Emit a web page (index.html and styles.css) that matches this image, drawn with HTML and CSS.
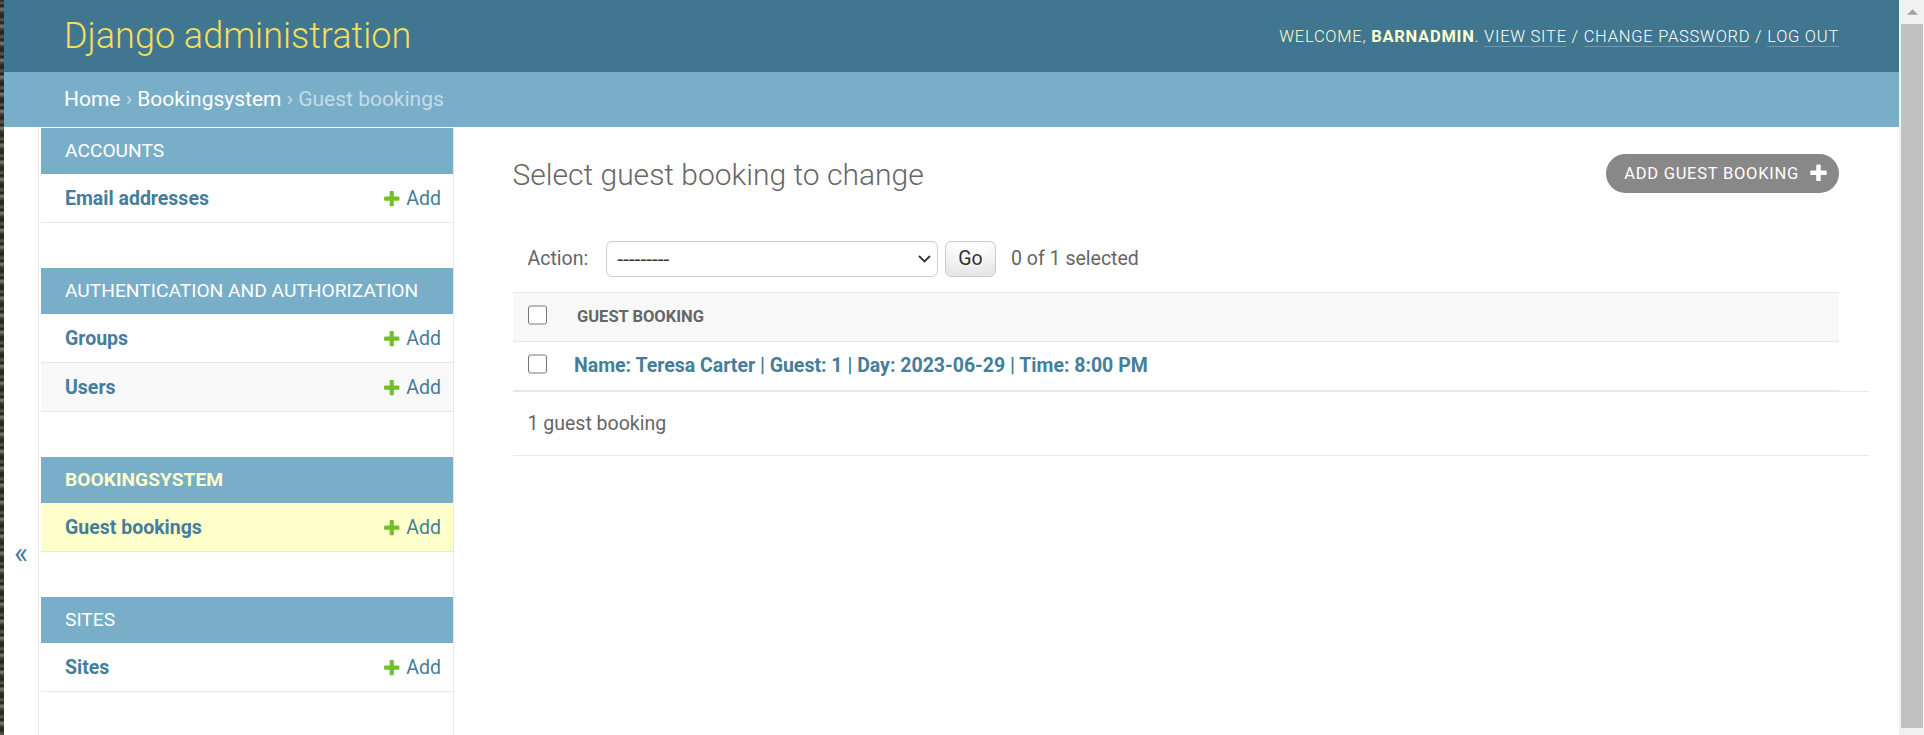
FILE: index.html
```html
<!DOCTYPE html>
<html lang="en">
<head>
<meta charset="utf-8">
<title>Select guest booking to change | Django site admin</title>
<link rel="stylesheet" href="styles.css">
</head>
<body>
<div class="desk"></div>
<div class="window">
  <header class="header">
    <h1 class="site-name">Django administration</h1>
    <div class="user-tools">
      Welcome, <strong>barnadmin</strong>. <a href="#">View site</a> / <a href="#">Change password</a> / <a href="#">Log out</a>
    </div>
  </header>
  <nav class="breadcrumbs">
    <a href="#">Home</a> › <a href="#">Bookingsystem</a> › Guest bookings
  </nav>
  <div class="main">
    <button class="toggle-nav" type="button">«</button>
    <nav class="sidebar">
      <div class="module">
        <table>
          <caption><a class="section" href="#">Accounts</a></caption>
          <tr><th><a href="#">Email addresses</a></th><td><a class="addlink" href="#"><svg class="addicon" viewBox="0 0 1792 1792"><path d="M1600 796v192q0 40-28 68t-68 28h-416v416q0 40-28 68t-68 28h-192q-40 0-68-28t-28-68v-416h-416q-40 0-68-28t-28-68v-192q0-40 28-68t68-28h416v-416q0-40 28-68t68-28h192q40 0 68 28t28 68v416h416q40 0 68 28t28 68z"/></svg>Add</a></td></tr>
        </table>
      </div>
      <div class="module">
        <table>
          <caption><a class="section" href="#">Authentication and Authorization</a></caption>
          <tr><th><a href="#">Groups</a></th><td><a class="addlink" href="#"><svg class="addicon" viewBox="0 0 1792 1792"><path d="M1600 796v192q0 40-28 68t-68 28h-416v416q0 40-28 68t-68 28h-192q-40 0-68-28t-28-68v-416h-416q-40 0-68-28t-28-68v-192q0-40 28-68t68-28h416v-416q0-40 28-68t68-28h192q40 0 68 28t28 68v416h416q40 0 68 28t28 68z"/></svg>Add</a></td></tr>
          <tr class="hovered"><th><a href="#">Users</a></th><td><a class="addlink" href="#"><svg class="addicon" viewBox="0 0 1792 1792"><path d="M1600 796v192q0 40-28 68t-68 28h-416v416q0 40-28 68t-68 28h-192q-40 0-68-28t-28-68v-416h-416q-40 0-68-28t-28-68v-192q0-40 28-68t68-28h416v-416q0-40 28-68t68-28h192q40 0 68 28t28 68v416h416q40 0 68 28t28 68z"/></svg>Add</a></td></tr>
        </table>
      </div>
      <div class="module current-app">
        <table>
          <caption><a class="section" href="#">Bookingsystem</a></caption>
          <tr class="current-model"><th><a href="#">Guest bookings</a></th><td><a class="addlink" href="#"><svg class="addicon" viewBox="0 0 1792 1792"><path d="M1600 796v192q0 40-28 68t-68 28h-416v416q0 40-28 68t-68 28h-192q-40 0-68-28t-28-68v-416h-416q-40 0-68-28t-28-68v-192q0-40 28-68t68-28h416v-416q0-40 28-68t68-28h192q40 0 68 28t28 68v416h416q40 0 68 28t28 68z"/></svg>Add</a></td></tr>
        </table>
      </div>
      <div class="module">
        <table>
          <caption><a class="section" href="#">Sites</a></caption>
          <tr><th><a href="#">Sites</a></th><td><a class="addlink" href="#"><svg class="addicon" viewBox="0 0 1792 1792"><path d="M1600 796v192q0 40-28 68t-68 28h-416v416q0 40-28 68t-68 28h-192q-40 0-68-28t-28-68v-416h-416q-40 0-68-28t-28-68v-192q0-40 28-68t68-28h416v-416q0-40 28-68t68-28h192q40 0 68 28t28 68v416h416q40 0 68 28t28 68z"/></svg>Add</a></td></tr>
        </table>
      </div>
    </nav>
    <div class="content">
      <div class="title-row">
        <h1 class="page-title">Select guest booking to change</h1>
        <a class="object-tool" href="#">Add guest booking<svg class="tooltag" viewBox="0 0 1792 1792"><path d="M1600 736v192q0 40-28 68t-68 28h-416v416q0 40-28 68t-68 28h-192q-40 0-68-28t-28-68v-416h-416q-40 0-68-28t-28-68v-192q0-40 28-68t68-28h416v-416q0-40 28-68t68-28h192q40 0 68 28t28 68v416h416q40 0 68 28t28 68z"/></svg></a>
      </div>
      <div class="actions">
        <label class="action-label">Action:</label>
        <select class="action-select">
          <option>---------</option>
          <option>Delete selected guest bookings</option>
        </select>
        <svg class="select-chevron" viewBox="0 0 13 8"><polyline points="1,1 6.5,6.5 12,1"/></svg>
        <button class="go-button" type="button">Go</button>
        <span class="action-counter">0 of 1 selected</span>
      </div>
      <table class="results">
        <thead>
          <tr>
            <th class="col-check"><span class="th-text"><input type="checkbox" class="cb"></span></th>
            <th class="col-main"><span class="th-text">Guest booking</span></th>
          </tr>
        </thead>
        <tbody>
          <tr>
            <td class="cell-check"><input type="checkbox" class="cb"></td>
            <th class="cell-main"><a href="#">Name: Teresa Carter | Guest: 1 | Day: 2023-06-29 | Time: 8:00 PM</a></th>
          </tr>
        </tbody>
      </table>
      <p class="paginator">1 guest booking</p>
    </div>
  </div>
</div>
<div class="scrollbar">
  <div class="sb-button"><svg class="sb-arrow" viewBox="0 0 12 6"><path d="M0 6L6 0L12 6Z"/></svg></div>
  <div class="sb-thumb"></div>
  <div class="sb-rest"></div>
</div>
</body>
</html>
```

FILE: styles.css
```css
html, body {
  margin: 0;
  padding: 0;
  height: 735px;
  overflow: hidden;
}

body {
  display: flex;
  font-family: Roboto, "Liberation Sans", Arial, sans-serif;
  font-size: 21px;
  color: #333;
  background: #fff;
}

a {
  color: #447e9b;
  text-decoration: none;
}

.desk {
  flex: 0 0 4px;
  background:
    repeating-linear-gradient(180deg, #2a2925 0px, #5d5b52 3px, #1b1a17 6px, #807d70 9px, #312f2a 13px, #242320 17px);
}

.window {
  flex: 1 1 auto;
  min-width: 0;
  display: flex;
  flex-direction: column;
  background: #fff;
}

/* Header */
.header {
  flex: 0 0 auto;
  display: flex;
  justify-content: space-between;
  align-items: center;
  padding: 15px 60px;
  background: #417690;
}

.site-name {
  margin: 0 30px 0 0;
  font-weight: 300;
  font-size: 36px;
  line-height: 42px;
  color: #f5dd5d;
}

.user-tools {
  font-size: 16.5px;
  font-weight: 300;
  letter-spacing: 0.75px;
  text-transform: uppercase;
  color: #ffc;
  text-align: right;
}

.user-tools strong {
  font-weight: 700;
}

.user-tools a {
  color: #fff;
  border-bottom: 1px solid rgba(255, 255, 255, 0.25);
}

/* Breadcrumbs */
.breadcrumbs {
  flex: 0 0 auto;
  padding: 15px 60px;
  background: #79aec8;
  color: #c4dce8;
  font-size: 21px;
  line-height: 25px;
}

.breadcrumbs a {
  color: #fff;
}

/* Main */
.main {
  flex: 0 0 850px;
  display: flex;
}

.toggle-nav {
  flex: 0 0 35px;
  display: flex;
  align-items: center;
  justify-content: center;
  padding: 0;
  border: 0;
  border-right: 1px solid #e8e8e8;
  background: #fff;
  font-family: Roboto, "Liberation Sans", Arial, sans-serif;
  font-size: 30px;
  color: #447e9b;
}

.sidebar {
  flex: 0 0 412px;
  margin-left: 2px;
  border-top: 1px solid transparent;
  border-right: 1px solid #e8e8e8;
}

.module {
  margin-bottom: 45px;
}

.module table {
  width: 100%;
  border-collapse: collapse;
}

.module caption {
  padding: 12px 12px 12px 24px;
  text-align: left;
  background: #79aec8;
  font-size: 19.2px;
  line-height: 22px;
  font-weight: 400;
  text-transform: uppercase;
  white-space: nowrap;
}

.module caption a {
  color: #fff;
}

.current-app caption a {
  color: #ffc;
  font-weight: 700;
}

.module th,
.module td {
  font-size: 19.5px;
  line-height: 24px;
  padding: 13px 12px 11px;
  border-bottom: 1px solid #e8e8e8;
  vertical-align: top;
  text-align: left;
}

.module th {
  width: 100%;
  padding-left: 24px;
  font-weight: 700;
}

.module td {
  white-space: nowrap;
}

.module tr.hovered {
  background: #f8f8f8;
}

.module tr.current-model {
  background: #ffc;
}

.addlink {
  font-weight: 400;
}

.addicon {
  width: 19.5px;
  height: 19.5px;
  margin-right: 4.5px;
  vertical-align: -3px;
  fill: #70bf2b;
}

/* Content */
.content {
  flex: 1 1 auto;
  min-width: 0;
  padding: 27px 60px 30px 58.5px;
}

.title-row {
  display: flex;
  justify-content: space-between;
  align-items: flex-start;
  margin-bottom: 33px;
}

.page-title {
  margin: 3px 0 0;
  font-size: 30px;
  line-height: 35px;
  font-weight: 300;
  color: #666;
}

.object-tool {
  display: flex;
  align-items: center;
  padding: 4.5px 10.5px 4.5px 18px;
  line-height: 30px;
  border-radius: 22.5px;
  background: #888;
  color: #fff;
  font-size: 16.5px;
  font-weight: 400;
  letter-spacing: 0.75px;
  text-transform: uppercase;
}

.tooltag {
  width: 21px;
  height: 21px;
  margin-left: 8.5px;
  fill: #fff;
}

.actions {
  display: flex;
  align-items: center;
  padding: 15px;
  line-height: 36px;
  color: #666;
  font-size: 19.5px;
}

.action-select {
  appearance: none;
  -webkit-appearance: none;
  width: 332px;
  height: 36px;
  margin: 0 0 0 18px;
  padding: 0 30px 0 10px;
  border: 1px solid #ccc;
  border-radius: 6px;
  background: #fff;
  color: #333;
  font-family: Roboto, "Liberation Sans", Arial, sans-serif;
  font-size: 21px;
}

.select-chevron {
  flex: 0 0 13px;
  width: 13px;
  height: 8px;
  margin-left: -20px;
  fill: none;
  stroke: #333;
  stroke-width: 1.8;
  pointer-events: none;
}

.go-button {
  height: 36px;
  margin-left: 14px;
  padding: 0 12px;
  border: 1px solid #ccc;
  border-radius: 6px;
  background: #fff;
  box-shadow: 0 -22.5px 30px -15px rgba(0, 0, 0, 0.15) inset;
  color: #333;
  font-family: Roboto, "Liberation Sans", Arial, sans-serif;
  font-size: 19.5px;
  line-height: 1;
}

.action-counter {
  margin-left: 15.5px;
}

.results {
  width: 100%;
  border-collapse: collapse;
}

.results thead th {
  padding: 0;
  border-top: 1px solid #e8e8e8;
  border-bottom: 1px solid #e8e8e8;
  background: #f8f8f8;
  color: #666;
  font-size: 16.5px;
  line-height: 24px;
  font-weight: 700;
  text-align: left;
  text-transform: uppercase;
  white-space: nowrap;
  vertical-align: middle;
}

.results thead th.col-check {
  width: 24.75px;
}

.th-text {
  display: block;
  padding: 12px 15px;
}

.cb {
  width: 19.5px;
  height: 19.5px;
  margin: 0;
  vertical-align: top;
}

.results tbody td,
.results tbody th {
  padding: 12px;
  border-bottom: 1px solid #e8e8e8;
  font-size: 19.5px;
  line-height: 24px;
  vertical-align: top;
  text-align: left;
}

.results tbody td.cell-check {
  text-align: center;
  padding: 12px 15px;
}

.results tbody th a {
  font-weight: 700;
}

.paginator {
  width: 100%;
  margin: 0;
  padding: 15px;
  border-top: 1px solid #e8e8e8;
  border-bottom: 1px solid #e8e8e8;
  color: #666;
  font-size: 19.5px;
  line-height: 33px;
}

/* Fake browser scrollbar */
.scrollbar {
  flex: 0 0 25px;
  display: flex;
  flex-direction: column;
  background: #f1f1f1;
}

.sb-button {
  height: 24px;
  display: flex;
  justify-content: center;
  align-items: flex-start;
}

.sb-arrow {
  width: 11px;
  height: 6px;
  margin-top: 9px;
  margin-left: 2px;
  fill: #a3a3a3;
}

.sb-thumb {
  height: 704px;
  margin: 0 1px 0 2px;
  background: #c1c1c1;
}

.sb-rest {
  flex: 1 1 auto;
}
```
